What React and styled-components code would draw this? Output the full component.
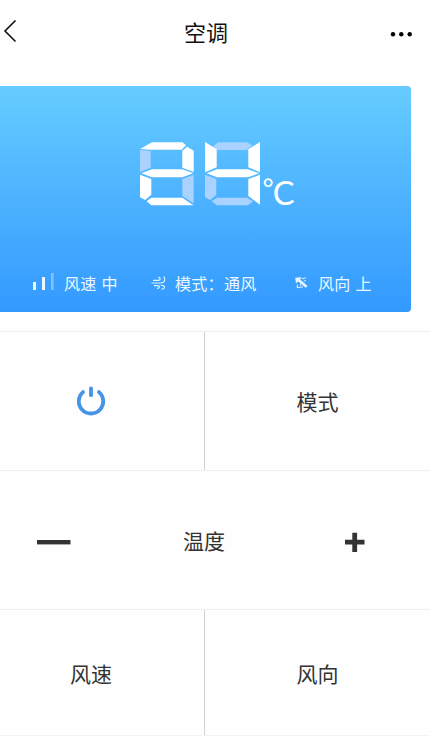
import React from 'react'
import styled, { createGlobalStyle } from 'styled-components'

const GlobalStyle = createGlobalStyle`
    * {
        box-sizing: border-box;
    }

    body {
        margin: 0;
        background: #fefefe;
        font-family: 'Noto Sans CJK SC', sans-serif;
        color: #333;
    }
`

const Page = styled.div`
    width: 433px;
    height: 736px;
    overflow: hidden;
`

const Header = styled.header`
    display: grid;
    grid-template-columns: 62px 288px 62px;
    align-items: center;
    height: 86px;
    padding-bottom: 22px;
`

const BackIcon = styled.svg`
    display: block;
    width: 20px;
    height: 26px;
    margin-top: -3px;
`

const Title = styled.h1`
    margin: -3px 0 0;
    font-size: 22px;
    font-weight: 400;
    line-height: 32px;
    text-align: center;
    color: #111;
`

const MoreIcon = styled.svg`
    display: block;
    width: 24px;
    height: 8px;
    margin-top: 4px;
    justify-self: end;
`

const Display = styled.section`
    display: flex;
    flex-direction: column;
    width: 410.5px;
    height: 226px;
    padding-top: 54px;
    border-radius: 0 4px 4px 0;
    background: linear-gradient(#66ccff, #3399ff);
    color: #fff;
`

const Temperature = styled.div`
    display: flex;
    height: 70px;
    padding-left: 138px;
`

const Digits = styled.svg`
    display: block;
    width: 124px;
    height: 68px;
`

const Unit = styled.div`
    display: flex;
    margin: 35px 0 0 0.5px;
    font-family: Lato, sans-serif;
    font-size: 32.5px;
    font-weight: 400;
    line-height: 36px;
`

const Degree = styled.span`
    margin-top: -5px;
    font-size: 27px;
`

const Celsius = styled.span`
    margin-left: -1px;
`

const StatusBar = styled.div`
    display: grid;
    grid-template-columns: 119px 143px 1fr;
    margin-top: 61px;
    padding-left: 32px;
`

const Status = styled.div`
    display: flex;
    align-items: center;
    height: 24px;
    font-size: 16px;
    letter-spacing: 0.3px;
    word-spacing: 1px;
    white-space: pre;
    color: #e9f8ff;
`

const StatusIcon = styled.svg`
    flex: none;
    width: ${props => props.$width}px;
    height: 20px;
    margin-right: ${props => props.$gap}px;
`

const Controls = styled.section`
    width: 430px;
    margin-top: 19px;
`

const Row = styled.div`
    display: grid;
    grid-template-columns: ${props => props.$columns || '205px 225px'};
    height: ${props => props.$height || 139}px;
    border-top: 1px solid #efefef;

    &:last-child {
        border-bottom: 1px solid #f3f3f3;
    }
`

const Button = styled.button`
    display: flex;
    align-items: center;
    justify-content: center;
    padding: 0 ${props => props.$right || 0}px 0 0;
    border: 0;
    border-right: ${props => (props.$divided ? '1px solid #d2d2d2' : '0')};
    background: transparent;
    font-family: inherit;
    font-size: 21px;
    line-height: 30px;
    color: #333;
`

const Label = styled.span`
    align-self: center;
    font-size: 21px;
    line-height: 30px;
    text-align: center;
`

const ButtonIcon = styled.svg`
    display: block;
    width: 36px;
    height: 36px;
`

// segment order: top, upper left, upper right, middle, lower left, lower right, bottom
const TWO = [
    ['2,9 14,2.3 44.5,2.3 48,5.3 43.7,9.7 12.7,9.7', true],
    ['2,10 12.7,11 12.7,27.7 2,32', false],
    ['49,6.7 55.7,10.7 55.7,32 44.3,27.7 44.3,11', true],
    ['3.3,33.3 14,29.3 44.3,29.3 55.3,33.3 44.3,37.3 14,37.3', true],
    ['2,34.7 13.3,39 13.3,54.7 7.3,60 2,57.3', true],
    ['55.7,34.7 44.3,39 44.3,56 55.7,63.5', false],
    ['8.7,61.3 13.3,57.7 44.3,57.7 55.5,65.3 13.3,65.3', true],
]

const FOUR = [
    ['75,6.5 80,2.3 108.7,2.3 114.5,5.3 108.7,9.9 79.3,9.9', false],
    ['67,2 78.7,9.3 78.7,27.3 67,32.3', true],
    ['122,2 110.3,9.3 110.3,27.3 122,32.3', true],
    ['68.7,33.3 79,29.3 110,29.3 121.3,33.3 110,37.3 79,37.3', true],
    ['67,34.7 78.3,39 78.3,54.7 72.3,60 67,57.3', false],
    ['122,34.7 110.3,39 110.3,56 122,64.7', true],
    ['73.5,61.3 78.7,57.7 109,57.7 115,61.3 110,65.3 79,65.3', false],
]

function Segments({ items }) {
    return items.map(([points, on]) => (
        <polygon key={points} points={points} fill={on ? '#fff' : '#a9d2ff'} />
    ))
}

function App() {
    return (
        <Page>
            <GlobalStyle />
            <Header>
                <BackIcon viewBox="0 0 20 26" fill="none" stroke="#111" strokeWidth="1.6">
                    <path d="M15.5 2.5 L5 13 L15.5 23.5" />
                </BackIcon>
                <Title>空调</Title>
                <MoreIcon viewBox="0 0 24 8" fill="#000">
                    <circle cx="5" cy="4.3" r="2.2" />
                    <circle cx="13.3" cy="4.3" r="2.2" />
                    <circle cx="21.7" cy="4.3" r="2.2" />
                </MoreIcon>
            </Header>

            <Display>
                <Temperature>
                    <Digits viewBox="0 0 124 68">
                        <Segments items={TWO} />
                        <Segments items={FOUR} />
                    </Digits>
                    <Unit>
                        <Degree>°</Degree>
                        <Celsius>C</Celsius>
                    </Unit>
                </Temperature>
                <StatusBar>
                    <Status>
                        <StatusIcon $width={22} $gap={10} viewBox="0 0 22 20" fill="#e9f8ff">
                            <rect x="1" y="9" width="3" height="8" />
                            <rect x="10" y="4" width="3" height="13" />
                            <rect x="19" y="0" width="2.6" height="17" opacity="0.4" />
                        </StatusIcon>
                        风速 中
                    </Status>
                    <Status>
                        <StatusIcon $width={15} $gap={9} viewBox="0 0 15 20" fill="none" stroke="#dff4ff" strokeWidth="1.2">
                            <path d="M2 7.4 H7.5 C9.8 7.2 9.6 4.2 7.4 4.4" />
                            <path d="M0.5 10 H10 C14.2 9.6 14.6 6 12.8 3.6" />
                            <path d="M3 12.6 H7 C9.2 12.8 9 15.6 6 15.4" />
                            <path d="M9.8 12.4 C14.6 11.8 14.6 16.4 10.5 16.2" />
                        </StatusIcon>
                        模式：通风
                    </Status>
                    <Status>
                        <StatusIcon $width={15} $gap={9} viewBox="0 0 15 20" fill="none" stroke="#e9f8ff" strokeWidth="1.3">
                            <path d="M1.5 5 L7.3 4.6 L5.8 6.4 L13.2 13 L11.8 14.4 L4.2 8.2 L2.2 10 Z" fill="#e9f8ff" strokeWidth="0.5" />
                            <path d="M8 6 L11.8 4.6 M9.8 8.4 L11.8 7.4 M3.4 11.6 L3.2 14.6 M3.2 14.6 L9 13.8 M6.4 10.8 L6.6 12.6" strokeWidth="1" />
                        </StatusIcon>
                        风向 上
                    </Status>
                </StatusBar>
            </Display>

            <Controls>
                <Row>
                    <Button $divided $right={22} aria-label="电源">
                        <ButtonIcon viewBox="0 0 36 36" fill="none" stroke="#4594e5" strokeWidth="3.8" strokeLinecap="round">
                            <path d="M10 9.1 A12.2 12.2 0 1 0 26 9.1" />
                            <path d="M18 5.4 V12.2" />
                        </ButtonIcon>
                    </Button>
                    <Button>模式</Button>
                </Row>
                <Row $columns="107px 194px 129px">
                    <Button aria-label="降低温度">
                        <ButtonIcon viewBox="0 0 36 36">
                            <rect x="1" y="18" width="33.5" height="4.4" fill="#333" />
                        </ButtonIcon>
                    </Button>
                    <Label>温度</Label>
                    <Button $right={21} aria-label="升高温度">
                        <ButtonIcon viewBox="0 0 36 36">
                            <path d="M8 20.2 H27.5 M17.7 10.7 V30" stroke="#333" strokeWidth="4.8" />
                        </ButtonIcon>
                    </Button>
                </Row>
                <Row $height={127}>
                    <Button $divided $right={22}>风速</Button>
                    <Button>风向</Button>
                </Row>
            </Controls>
        </Page>
    )
}

export default App
